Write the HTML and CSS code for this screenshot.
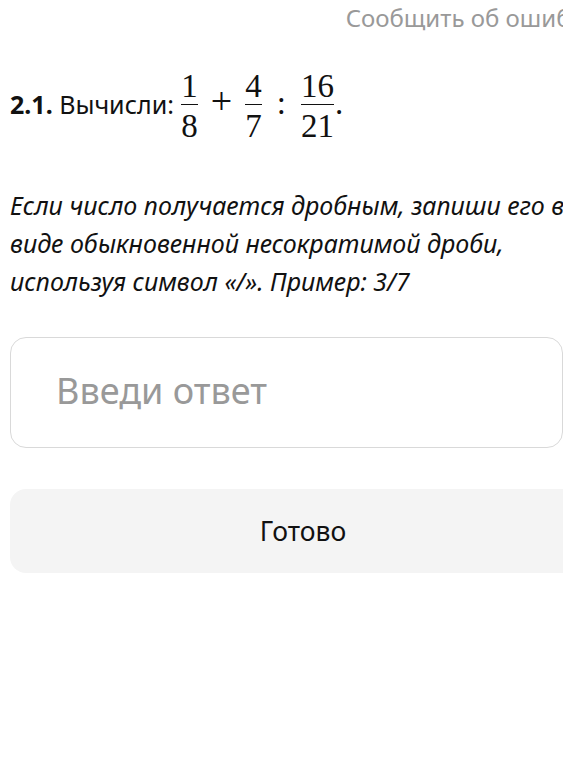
FILE: index.html
```html
<!DOCTYPE html>
<html lang="ru">
<head>
<meta charset="utf-8">
<title>Задание 2.1</title>
<link rel="stylesheet" href="styles.css">
</head>
<body>
<div class="page">
  <div class="report">Сообщить об ошибке</div>
  <div class="task">
    <b>2.1.</b> Вычисли:
    <span class="math">
      <span class="frac"><span class="num">1</span><span class="den">8</span></span><span class="op">+</span><span class="frac"><span class="num">4</span><span class="den">7</span></span><span class="rel">:</span><span class="frac"><span class="num">16</span><span class="den">21</span></span><span class="dot">.</span>
    </span>
  </div>
  <p class="hint">Если число получается дробным, запиши его в виде обыкновенной несократимой дроби, используя символ «/». Пример: 3/7</p>
  <input class="answer" type="text" placeholder="Введи ответ">
  <button class="done" type="button">Готово</button>
</div>
</body>
</html>
```
FILE: styles.css
```css
html, body {
  margin: 0;
  padding: 0;
  background: #fff;
  overflow: hidden;
}
body {
  font-family: "Noto Sans", "Open Sans", sans-serif;
  color: #111;
}
.page {
  width: 586px;
  padding: 0 10px;
  display: flex;
  flex-direction: column;
  align-items: flex-start;
}
.report {
  align-self: stretch;
  text-align: right;
  font-size: 24px;
  line-height: 30px;
  padding-top: 3px;
  color: #999;
}
.task {
  margin-top: 37px;
  font-size: 25px;
  white-space: nowrap;
}
.task b {
  font-weight: 700;
}
.math {
  font-family: "Liberation Serif", "DejaVu Serif", serif;
  font-size: 33px;
  margin-left: 1px;
}
.frac {
  display: inline-flex;
  flex-direction: column;
  align-items: stretch;
  vertical-align: middle;
  text-align: center;
}
.num {
  line-height: 1;
  padding: 0 0 1px;
  border-bottom: 1.2px solid #111;
}
.den {
  line-height: 1;
  padding: 5px 0 0;
}
.op {
  font-size: 38px;
  font-weight: 300;
  line-height: 0;
  margin: 0 13px;
}
.rel {
  margin: 0 15px;
}
.dot {
  margin-left: 1px;
}
.hint {
  margin: 43px 0 0;
  font-style: italic;
  font-size: 25px;
  line-height: 38px;
}
.answer {
  margin-top: 37px;
  box-sizing: border-box;
  width: 553px;
  height: 111px;
  border: 1px solid #d9d9d9;
  border-radius: 16px;
  padding: 0 20px 4px 45px;
  font-family: "Noto Sans", "Open Sans", sans-serif;
  font-size: 36px;
  color: #111;
  background: #fff;
  outline: none;
}
.answer::placeholder {
  color: #999;
}
.done {
  margin-top: 41px;
  align-self: stretch;
  height: 84px;
  border: none;
  border-radius: 16px;
  background: #f4f4f4;
  font-family: "Noto Sans", "Open Sans", sans-serif;
  font-size: 26.5px;
  color: #111;
}
```
